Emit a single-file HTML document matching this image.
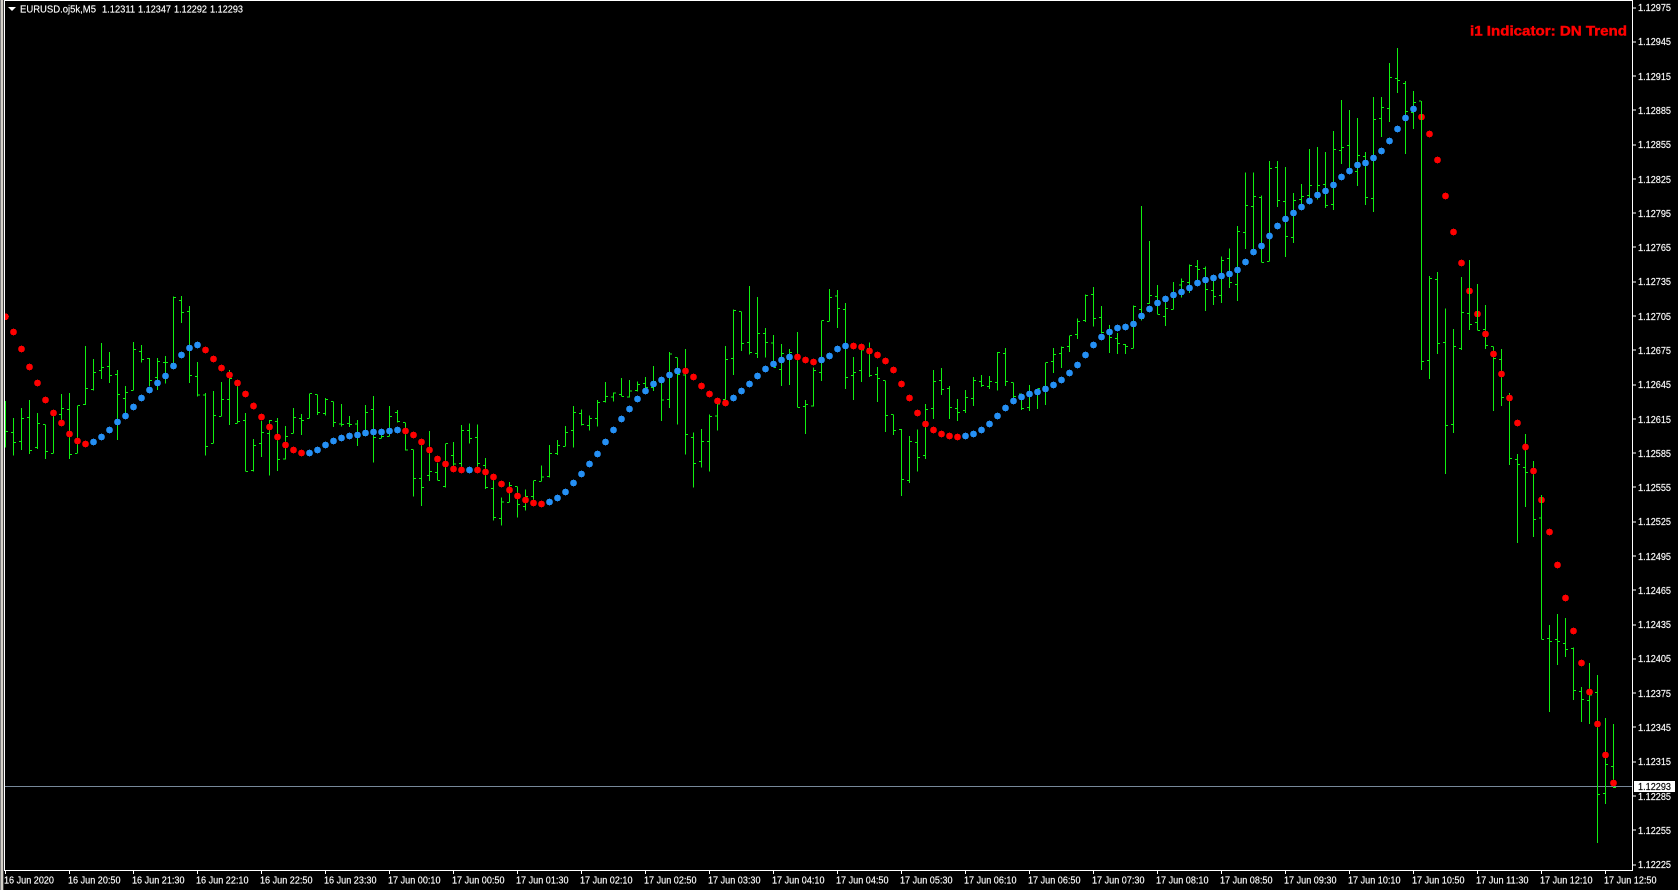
<!DOCTYPE html>
<html><head><meta charset="utf-8"><title>EURUSD.oj5k,M5</title>
<style>
html,body{margin:0;padding:0;background:#000;width:1678px;height:890px;overflow:hidden}
svg{display:block;position:absolute;left:0;top:0}
text{font-family:"Liberation Sans",sans-serif;font-size:10px;fill:#fff;stroke:#fff;stroke-width:.15}
.b{fill:none;stroke:#10f010;stroke-width:1;vector-effect:non-scaling-stroke;shape-rendering:crispEdges}
.r,.u{fill:none;stroke-width:6.7;stroke-linecap:round;vector-effect:non-scaling-stroke;shape-rendering:crispEdges}
.r{stroke:#ff0000}.u{stroke:#2590f5}
</style></head><body>
<svg width="1678" height="890" viewBox="0 0 1678 890" xmlns="http://www.w3.org/2000/svg">
<rect width="1678" height="890" fill="#000"/>
<g shape-rendering="crispEdges">
<rect x="4" y="0" width="1629" height="1" fill="#fff"/>
<rect x="4" y="870" width="1629" height="1" fill="#fff"/>
<rect x="1632" y="0" width="1" height="871" fill="#fff"/>
<rect x="5" y="786" width="1627" height="1" fill="#778899"/>
</g>

<g transform="translate(0,280) scale(1,.33333)">
<path class="b" d="M5.5 363V503M6 454h2M13.5 414V527M11 457h2M14 487h2M21.5 384V510M19 484h2M22 415h2M29.5 360V522M27 412h2M30 512h2M37.5 399V507M35 502h2M38 430h2M45.5 433V537M43 433h2M46 515h2M53.5 390V521M51 520h2M54 395h2M61.5 342V440M59 403h2M62 385h2M69.5 339V537M67 388h2M70 523h2M77.5 376V521M75 521h2M78 376h2M85.5 198V375M83 374h2M86 325h2M93.5 237V332M91 328h2M94 277h2M101.5 189V297M99 271h2M102 262h2M109.5 216V309M107 259h2M110 286h2M117.5 270V480M115 283h2M118 343h2M125.5 318V405M123 355h2M126 338h2M133.5 186V332M131 331h2M134 208h2M141.5 195V248M139 214h2M142 239h2M149.5 234V318M147 235h2M150 301h2M157.5 234V330M155 292h2M158 244h2M165.5 228V310M163 247h2M166 247h2M173.5 49V260M171 250h2M174 52h2M181.5 48V129M179 61h2M182 97h2M189.5 78V309M187 94h2M190 286h2M197.5 246V349M195 289h2M198 345h2M205.5 339V527M203 345h2M206 499h2M213.5 333V491M211 491h2M214 407h2M221.5 306V410M219 410h2M222 358h2M229.5 270V435M227 358h2M230 295h2M237.5 316V431M235 430h2M238 425h2M245.5 399V575M243 421h2M246 574h2M253.5 477V575M251 572h2M254 496h2M261.5 423V531M259 490h2M262 457h2M269.5 420V587M267 460h2M270 421h2M277.5 414V573M275 424h2M278 538h2M285.5 438V539M283 537h2M286 470h2M293.5 384V461M291 460h2M294 412h2M301.5 402V465M299 415h2M302 421h2M309.5 340V415M307 415h2M310 340h2M317.5 343V405M315 343h2M318 398h2M325.5 354V406M323 400h2M326 358h2M333.5 364V441M331 364h2M334 427h2M341.5 372V440M339 432h2M342 433h2M349.5 408V441M347 430h2M350 433h2M357.5 420V498M355 432h2M358 465h2M365.5 375V470M363 466h2M366 398h2M373.5 348V548M371 388h2M374 472h2M381.5 450V475M379 475h2M382 470h2M389.5 378V470M387 469h2M390 409h2M397.5 390V428M395 397h2M398 425h2M405.5 427V512M403 427h2M406 510h2M413.5 508V650M411 508h2M414 595h2"/>
<path class="b" d="M421.5 490V678M419 595h2M422 622h2M429.5 453V603M427 587h2M430 574h2M437.5 549V602M435 577h2M438 602h2M445.5 490V623M443 620h2M446 490h2M453.5 486V560M451 526h2M454 552h2M461.5 435V565M459 550h2M462 451h2M469.5 430V491M467 451h2M470 475h2M477.5 433V560M475 472h2M478 551h2M485.5 534V627M483 556h2M486 622h2M493.5 590V722M491 625h2M494 712h2M501.5 652V737M499 715h2M502 666h2M509.5 606V668M507 667h2M510 617h2M517.5 619V713M515 619h2M518 673h2M525.5 628V692M523 679h2M526 650h2M533.5 602V665M531 650h2M534 602h2M541.5 556V605M539 604h2M542 591h2M549.5 495V593M547 590h2M550 520h2M557.5 480V525M555 521h2M558 497h2M565.5 438V500M563 499h2M566 457h2M573.5 378V503M571 451h2M574 397h2M581.5 388V437M579 400h2M582 433h2M589.5 406V452M587 436h2M590 415h2M597.5 360V440M595 415h2M598 367h2M605.5 306V367M603 365h2M606 349h2M613.5 337V365M611 351h2M614 339h2M621.5 294V350M619 343h2M622 349h2M629.5 300V352M627 351h2M630 333h2M637.5 304V335M635 331h2M638 313h2M645.5 291V340M643 310h2M646 323h2M653.5 258V333M651 322h2M654 305h2M661.5 300V423M659 306h2M662 360h2M669.5 216V384M667 358h2M670 222h2M677.5 232V434M675 232h2M678 283h2M685.5 207V524M683 285h2M686 463h2M693.5 457V623M691 472h2M694 550h2M701.5 447V563M699 544h2M702 484h2M709.5 403V575M707 484h2M710 409h2M717.5 362V452M715 408h2M718 372h2M725.5 198V362M723 358h2M726 238h2M733.5 88V285M731 235h2M734 91h2M741.5 94V213M739 94h2M742 190h2M749.5 18V224M747 187h2M750 217h2M757.5 51V234M755 220h2M758 160h2M765.5 144V232M763 160h2M766 187h2M773.5 165V262M771 189h2M774 262h2M781.5 192V318M779 268h2M782 220h2M789.5 207V315M787 238h2M790 217h2M797.5 156V383M795 230h2M798 382h2M805.5 360V462M803 379h2M806 373h2M813.5 262V380M811 378h2M814 271h2M821.5 121V303M819 277h2M822 121h2M829.5 27V124M827 124h2M830 52h2M837.5 30V144M835 48h2M838 86h2"/>
<path class="r" d="M5.5 110h.01M13.5 156h.01M21.5 207h.01M29.5 261h.01M37.5 309h.01M45.5 360h.01M53.5 399h.01M61.5 429h.01M69.5 462h.01M77.5 483h.01M85.5 492h.01M205.5 210h.01M213.5 237h.01M221.5 264h.01M229.5 285h.01M237.5 309h.01M245.5 342h.01M253.5 378h.01M261.5 411h.01M269.5 441h.01M277.5 471h.01M285.5 495h.01M293.5 510h.01M301.5 519h.01M405.5 453h.01M413.5 465h.01M421.5 486h.01M429.5 510h.01M437.5 537h.01M445.5 552h.01M453.5 567h.01M461.5 570h.01M477.5 570h.01M485.5 576h.01M493.5 591h.01M501.5 612h.01M509.5 630h.01M517.5 648h.01M525.5 660h.01M533.5 669h.01M541.5 672h.01M685.5 273h.01M693.5 291h.01M701.5 318h.01M709.5 342h.01M717.5 363h.01M725.5 369h.01M797.5 231h.01M805.5 240h.01M813.5 246h.01"/>
<path class="u" d="M93.5 486h.01M101.5 471h.01M109.5 450h.01M117.5 426h.01M125.5 408h.01M133.5 381h.01M141.5 354h.01M149.5 330h.01M157.5 309h.01M165.5 288h.01M173.5 258h.01M181.5 225h.01M189.5 204h.01M197.5 195h.01M309.5 519h.01M317.5 510h.01M325.5 495h.01M333.5 483h.01M341.5 474h.01M349.5 468h.01M357.5 465h.01M365.5 459h.01M373.5 456h.01M381.5 456h.01M389.5 453h.01M397.5 450h.01M469.5 570h.01M549.5 666h.01M557.5 654h.01M565.5 636h.01M573.5 609h.01M581.5 582h.01M589.5 552h.01M597.5 522h.01M605.5 486h.01M613.5 450h.01M621.5 417h.01M629.5 387h.01M637.5 357h.01M645.5 333h.01M653.5 312h.01M661.5 300h.01M669.5 285h.01M677.5 273h.01M733.5 354h.01M741.5 333h.01M749.5 312h.01M757.5 288h.01M765.5 267h.01M773.5 252h.01M781.5 240h.01M789.5 231h.01M821.5 240h.01M829.5 228h.01M837.5 207h.01"/>
</g>

<g transform="translate(0,250) scale(1,.33333)">
<path class="b" d="M845.5 159V417M843 178h2M846 382h2M853.5 321V450M851 377h2M854 367h2M861.5 295V396M859 361h2M862 300h2M869.5 277V381M867 295h2M870 377h2M877.5 351V456M875 373h2M878 385h2M885.5 391V546M883 391h2M886 496h2M893.5 493V555M891 493h2M894 541h2M901.5 537V738M899 538h2M902 688h2M909.5 558V699M907 691h2M910 574h2M917.5 538V665M915 577h2M918 622h2M925.5 462V627M923 616h2M926 478h2M933.5 360V507M931 475h2M934 394h2M941.5 354V435M939 391h2M942 418h2M949.5 408V507M947 415h2M950 472h2M957.5 447V513M955 475h2M958 487h2M965.5 420V489M963 481h2M966 442h2M973.5 381V468M971 445h2M974 391h2M981.5 375V411M979 394h2M982 406h2M989.5 378V417M987 409h2M990 394h2M997.5 306V421M995 397h2M998 307h2M1005.5 294V408M1003 310h2M1006 394h2M1013.5 397V445M1011 397h2M1014 439h2M1021.5 432V480M1019 432h2M1022 475h2M1029.5 405V483M1027 472h2M1030 430h2M1037.5 415V477M1035 420h2M1038 415h2M1045.5 337V465M1043 410h2M1046 337h2M1053.5 294V369M1051 334h2M1054 313h2M1061.5 289V354M1059 310h2M1062 292h2M1069.5 256V306M1067 289h2M1070 256h2M1077.5 205V267M1075 253h2M1078 214h2M1085.5 133V216M1083 212h2M1086 136h2M1093.5 111V229M1091 133h2M1094 205h2M1101.5 168V249M1099 202h2M1102 247h2M1109.5 225V309M1107 243h2M1110 262h2M1117.5 249V312M1115 265h2M1118 280h2M1125.5 282V312M1123 283h2M1126 289h2M1133.5 166V296M1131 295h2M1134 169h2M1141.5 -132V212M1139 178h2M1142 205h2M1149.5 -27V162M1147 160h2M1150 136h2M1157.5 105V194M1155 139h2M1158 193h2M1165.5 150V228M1163 199h2M1166 175h2M1173.5 96V179M1171 178h2M1174 140h2"/>
<path class="r" d="M853.5 288h.01M861.5 291h.01M869.5 303h.01M877.5 315h.01M885.5 333h.01M893.5 360h.01M901.5 402h.01M909.5 444h.01M917.5 489h.01M925.5 522h.01M933.5 540h.01M941.5 552h.01M949.5 558h.01M957.5 561h.01"/>
<path class="u" d="M845.5 288h.01M965.5 558h.01M973.5 552h.01M981.5 540h.01M989.5 522h.01M997.5 498h.01M1005.5 474h.01M1013.5 453h.01M1021.5 441h.01M1029.5 432h.01M1037.5 426h.01M1045.5 417h.01M1053.5 405h.01M1061.5 390h.01M1069.5 369h.01M1077.5 345h.01M1085.5 315h.01M1093.5 285h.01M1101.5 261h.01M1109.5 246h.01M1117.5 234h.01M1125.5 231h.01M1133.5 222h.01M1141.5 198h.01M1149.5 177h.01M1157.5 159h.01M1165.5 147h.01M1173.5 135h.01"/>
</g>

<g transform="translate(0,30) scale(1,.33333)">
<path class="b" d="M1181.5 745V803M1179 765h2M1182 754h2M1189.5 703V789M1187 757h2M1190 706h2M1197.5 690V760M1195 710h2M1198 718h2M1205.5 709V843M1203 715h2M1206 778h2M1213.5 740V825M1211 781h2M1214 800h2M1221.5 679V819M1219 796h2M1222 691h2M1229.5 655V774M1227 685h2M1230 757h2M1237.5 588V813M1235 763h2M1238 604h2M1245.5 427V657M1243 607h2M1246 526h2M1253.5 427V660M1251 529h2M1254 499h2M1261.5 496V698M1259 502h2M1262 697h2M1269.5 393V695M1267 694h2M1270 415h2M1277.5 393V531M1275 412h2M1278 511h2M1285.5 411V681M1283 514h2M1286 619h2M1293.5 489V639M1291 622h2M1294 511h2M1301.5 462V520M1299 508h2M1302 499h2M1309.5 357V510M1307 496h2M1310 466h2M1317.5 351V508M1315 490h2M1318 466h2M1325.5 366V534M1323 463h2M1326 526h2M1333.5 303V540M1331 523h2M1334 358h2M1341.5 210V402M1339 361h2M1342 352h2M1349.5 240V420M1347 346h2M1350 424h2M1357.5 264V468M1355 424h2M1358 376h2M1365.5 366V525M1363 379h2M1366 502h2M1373.5 201V546M1371 505h2M1374 268h2M1381.5 201V321M1379 265h2M1382 232h2M1389.5 99V276M1387 235h2M1390 142h2M1397.5 54V189M1395 145h2M1398 151h2M1405.5 153V372M1403 160h2M1406 244h2M1413.5 183V297M1411 247h2M1414 217h2"/>
<path class="r" d="M1421.5 261h.01M1429.5 312h.01M1437.5 390h.01M1445.5 498h.01M1453.5 606h.01M1461.5 699h.01M1469.5 783h.01M1477.5 852h.01"/>
<path class="u" d="M1181.5 786h.01M1189.5 774h.01M1197.5 759h.01M1205.5 750h.01M1213.5 744h.01M1221.5 738h.01M1229.5 732h.01M1237.5 720h.01M1245.5 696h.01M1253.5 666h.01M1261.5 648h.01M1269.5 618h.01M1277.5 588h.01M1285.5 567h.01M1293.5 549h.01M1301.5 531h.01M1309.5 513h.01M1317.5 495h.01M1325.5 483h.01M1333.5 465h.01M1341.5 441h.01M1349.5 423h.01M1357.5 405h.01M1365.5 399h.01M1373.5 384h.01M1381.5 363h.01M1389.5 333h.01M1397.5 297h.01M1405.5 264h.01M1413.5 237h.01"/>
</g>

<g transform="translate(0,240) scale(1,.33333)">
<path class="b" d="M1421.5 -417V390M1419 -417h2M1422 364h2M1429.5 108V417M1427 361h2M1430 115h2M1437.5 96V342M1435 118h2M1438 310h2M1445.5 205V702M1443 307h2M1446 556h2M1453.5 267V579M1451 553h2M1454 319h2M1461.5 111V330M1459 325h2M1462 217h2M1469.5 60V270M1467 220h2M1470 253h2M1477.5 132V272M1475 247h2M1478 271h2M1485.5 195V327M1483 268h2M1486 316h2M1493.5 319V513M1491 319h2M1494 355h2M1501.5 327V498M1499 358h2M1502 472h2M1509.5 459V675M1507 472h2M1510 655h2M1517.5 642V909M1515 658h2M1518 673h2M1525.5 582V801M1523 682h2M1526 697h2M1533.5 663V891M1531 690h2M1534 838h2"/>
<path class="r" d="M1485.5 282h.01M1493.5 342h.01M1501.5 402h.01M1509.5 474h.01M1517.5 549h.01M1525.5 621h.01M1533.5 693h.01M1541.5 780h.01M1549.5 876h.01"/>
</g>

<g transform="translate(0,590) scale(1,.33333)">
<path class="b" d="M1541.5 -285V148M1539 -216h2M1542 148h2M1549.5 105V366M1547 145h2M1550 154h2M1557.5 72V225M1555 148h2M1558 154h2M1565.5 84V201M1563 160h2M1566 178h2M1573.5 172V330M1571 175h2M1574 301h2M1581.5 291V396M1579 304h2M1582 328h2M1589.5 219V402M1587 331h2M1590 315h2M1597.5 255V759M1595 307h2M1598 613h2M1605.5 384V642M1603 610h2M1606 523h2M1613.5 402V594M1611 529h2M1614 592h2"/>
<path class="r" d="M1557.5 -75h.01M1565.5 24h.01M1573.5 123h.01M1581.5 219h.01M1589.5 306h.01M1597.5 402h.01M1605.5 495h.01M1613.5 579h.01"/>
</g>

<g shape-rendering="crispEdges">
<rect x="0" y="0" width="1" height="890" fill="#808080"/>
<rect x="1" y="0" width="2" height="890" fill="#d4d0c8"/>
<rect x="3" y="0" width="1" height="890" fill="#404040"/>
<rect x="4" y="0" width="1" height="871" fill="#fff"/>
</g>

<path d="M8 7h8l-4 4z" fill="#fff"/>
<text x="20" y="12.5" textLength="76" lengthAdjust="spacingAndGlyphs">EURUSD.oj5k,M5</text>
<text x="102" y="12.5" textLength="33" lengthAdjust="spacingAndGlyphs">1.12311</text>
<text x="138" y="12.5" textLength="33" lengthAdjust="spacingAndGlyphs">1.12347</text>
<text x="174" y="12.5" textLength="33" lengthAdjust="spacingAndGlyphs">1.12292</text>
<text x="210" y="12.5" textLength="33" lengthAdjust="spacingAndGlyphs">1.12293</text>

<text x="1470" y="35.5" textLength="157" lengthAdjust="spacingAndGlyphs" style="font-size:14px;font-weight:bold;fill:#f00;stroke:#f00;stroke-width:.45">i1 Indicator: DN Trend</text>

<path shape-rendering="crispEdges" stroke="#fff" fill="none" d="M1633 8h3M1633 42h3M1633 76h3M1633 110h3M1633 145h3M1633 179h3M1633 213h3M1633 247h3M1633 282h3M1633 316h3M1633 350h3M1633 385h3M1633 419h3M1633 453h3M1633 487h3M1633 522h3M1633 556h3M1633 590h3M1633 625h3M1633 659h3M1633 693h3M1633 727h3M1633 762h3M1633 796h3M1633 830h3M1633 865h3M5.5 871v3M69.5 871v3M133.5 871v3M197.5 871v3M261.5 871v3M325.5 871v3M389.5 871v3M453.5 871v3M517.5 871v3M581.5 871v3M645.5 871v3M709.5 871v3M773.5 871v3M837.5 871v3M901.5 871v3M965.5 871v3M1029.5 871v3M1093.5 871v3M1157.5 871v3M1221.5 871v3M1285.5 871v3M1349.5 871v3M1413.5 871v3M1477.5 871v3M1541.5 871v3M1605.5 871v3"/>

<g>
<text x="1638" y="11" textLength="33" lengthAdjust="spacingAndGlyphs">1.12975</text>
<text x="1638" y="45" textLength="33" lengthAdjust="spacingAndGlyphs">1.12945</text>
<text x="1638" y="80" textLength="33" lengthAdjust="spacingAndGlyphs">1.12915</text>
<text x="1638" y="114" textLength="33" lengthAdjust="spacingAndGlyphs">1.12885</text>
<text x="1638" y="148" textLength="33" lengthAdjust="spacingAndGlyphs">1.12855</text>
<text x="1638" y="183" textLength="33" lengthAdjust="spacingAndGlyphs">1.12825</text>
<text x="1638" y="217" textLength="33" lengthAdjust="spacingAndGlyphs">1.12795</text>
<text x="1638" y="251" textLength="33" lengthAdjust="spacingAndGlyphs">1.12765</text>
<text x="1638" y="285" textLength="33" lengthAdjust="spacingAndGlyphs">1.12735</text>
<text x="1638" y="320" textLength="33" lengthAdjust="spacingAndGlyphs">1.12705</text>
<text x="1638" y="354" textLength="33" lengthAdjust="spacingAndGlyphs">1.12675</text>
<text x="1638" y="388" textLength="33" lengthAdjust="spacingAndGlyphs">1.12645</text>
<text x="1638" y="423" textLength="33" lengthAdjust="spacingAndGlyphs">1.12615</text>
<text x="1638" y="457" textLength="33" lengthAdjust="spacingAndGlyphs">1.12585</text>
<text x="1638" y="491" textLength="33" lengthAdjust="spacingAndGlyphs">1.12555</text>
<text x="1638" y="525" textLength="33" lengthAdjust="spacingAndGlyphs">1.12525</text>
<text x="1638" y="560" textLength="33" lengthAdjust="spacingAndGlyphs">1.12495</text>
<text x="1638" y="594" textLength="33" lengthAdjust="spacingAndGlyphs">1.12465</text>
<text x="1638" y="628" textLength="33" lengthAdjust="spacingAndGlyphs">1.12435</text>
<text x="1638" y="662" textLength="33" lengthAdjust="spacingAndGlyphs">1.12405</text>
<text x="1638" y="697" textLength="33" lengthAdjust="spacingAndGlyphs">1.12375</text>
<text x="1638" y="731" textLength="33" lengthAdjust="spacingAndGlyphs">1.12345</text>
<text x="1638" y="765" textLength="33" lengthAdjust="spacingAndGlyphs">1.12315</text>
<text x="1638" y="800" textLength="33" lengthAdjust="spacingAndGlyphs">1.12285</text>
<text x="1638" y="834" textLength="33" lengthAdjust="spacingAndGlyphs">1.12255</text>
<text x="1638" y="868" textLength="33" lengthAdjust="spacingAndGlyphs">1.12225</text>
</g>

<rect x="1634" y="781" width="41" height="11" fill="#fff" shape-rendering="crispEdges"/>
<text x="1638" y="790" textLength="33" lengthAdjust="spacingAndGlyphs" style="fill:#000;stroke:#000">1.12293</text>

<g>
<text x="4" y="883.5" textLength="50" lengthAdjust="spacingAndGlyphs">16 Jun 2020</text>
<text x="68" y="883.5" textLength="52.5" lengthAdjust="spacingAndGlyphs">16 Jun 20:50</text>
<text x="132" y="883.5" textLength="52.5" lengthAdjust="spacingAndGlyphs">16 Jun 21:30</text>
<text x="196" y="883.5" textLength="52.5" lengthAdjust="spacingAndGlyphs">16 Jun 22:10</text>
<text x="260" y="883.5" textLength="52.5" lengthAdjust="spacingAndGlyphs">16 Jun 22:50</text>
<text x="324" y="883.5" textLength="52.5" lengthAdjust="spacingAndGlyphs">16 Jun 23:30</text>
<text x="388" y="883.5" textLength="52.5" lengthAdjust="spacingAndGlyphs">17 Jun 00:10</text>
<text x="452" y="883.5" textLength="52.5" lengthAdjust="spacingAndGlyphs">17 Jun 00:50</text>
<text x="516" y="883.5" textLength="52.5" lengthAdjust="spacingAndGlyphs">17 Jun 01:30</text>
<text x="580" y="883.5" textLength="52.5" lengthAdjust="spacingAndGlyphs">17 Jun 02:10</text>
<text x="644" y="883.5" textLength="52.5" lengthAdjust="spacingAndGlyphs">17 Jun 02:50</text>
<text x="708" y="883.5" textLength="52.5" lengthAdjust="spacingAndGlyphs">17 Jun 03:30</text>
<text x="772" y="883.5" textLength="52.5" lengthAdjust="spacingAndGlyphs">17 Jun 04:10</text>
<text x="836" y="883.5" textLength="52.5" lengthAdjust="spacingAndGlyphs">17 Jun 04:50</text>
<text x="900" y="883.5" textLength="52.5" lengthAdjust="spacingAndGlyphs">17 Jun 05:30</text>
<text x="964" y="883.5" textLength="52.5" lengthAdjust="spacingAndGlyphs">17 Jun 06:10</text>
<text x="1028" y="883.5" textLength="52.5" lengthAdjust="spacingAndGlyphs">17 Jun 06:50</text>
<text x="1092" y="883.5" textLength="52.5" lengthAdjust="spacingAndGlyphs">17 Jun 07:30</text>
<text x="1156" y="883.5" textLength="52.5" lengthAdjust="spacingAndGlyphs">17 Jun 08:10</text>
<text x="1220" y="883.5" textLength="52.5" lengthAdjust="spacingAndGlyphs">17 Jun 08:50</text>
<text x="1284" y="883.5" textLength="52.5" lengthAdjust="spacingAndGlyphs">17 Jun 09:30</text>
<text x="1348" y="883.5" textLength="52.5" lengthAdjust="spacingAndGlyphs">17 Jun 10:10</text>
<text x="1412" y="883.5" textLength="52.5" lengthAdjust="spacingAndGlyphs">17 Jun 10:50</text>
<text x="1476" y="883.5" textLength="52.5" lengthAdjust="spacingAndGlyphs">17 Jun 11:30</text>
<text x="1540" y="883.5" textLength="52.5" lengthAdjust="spacingAndGlyphs">17 Jun 12:10</text>
<text x="1604" y="883.5" textLength="52.5" lengthAdjust="spacingAndGlyphs">17 Jun 12:50</text>
</g>
</svg>
</body></html>
